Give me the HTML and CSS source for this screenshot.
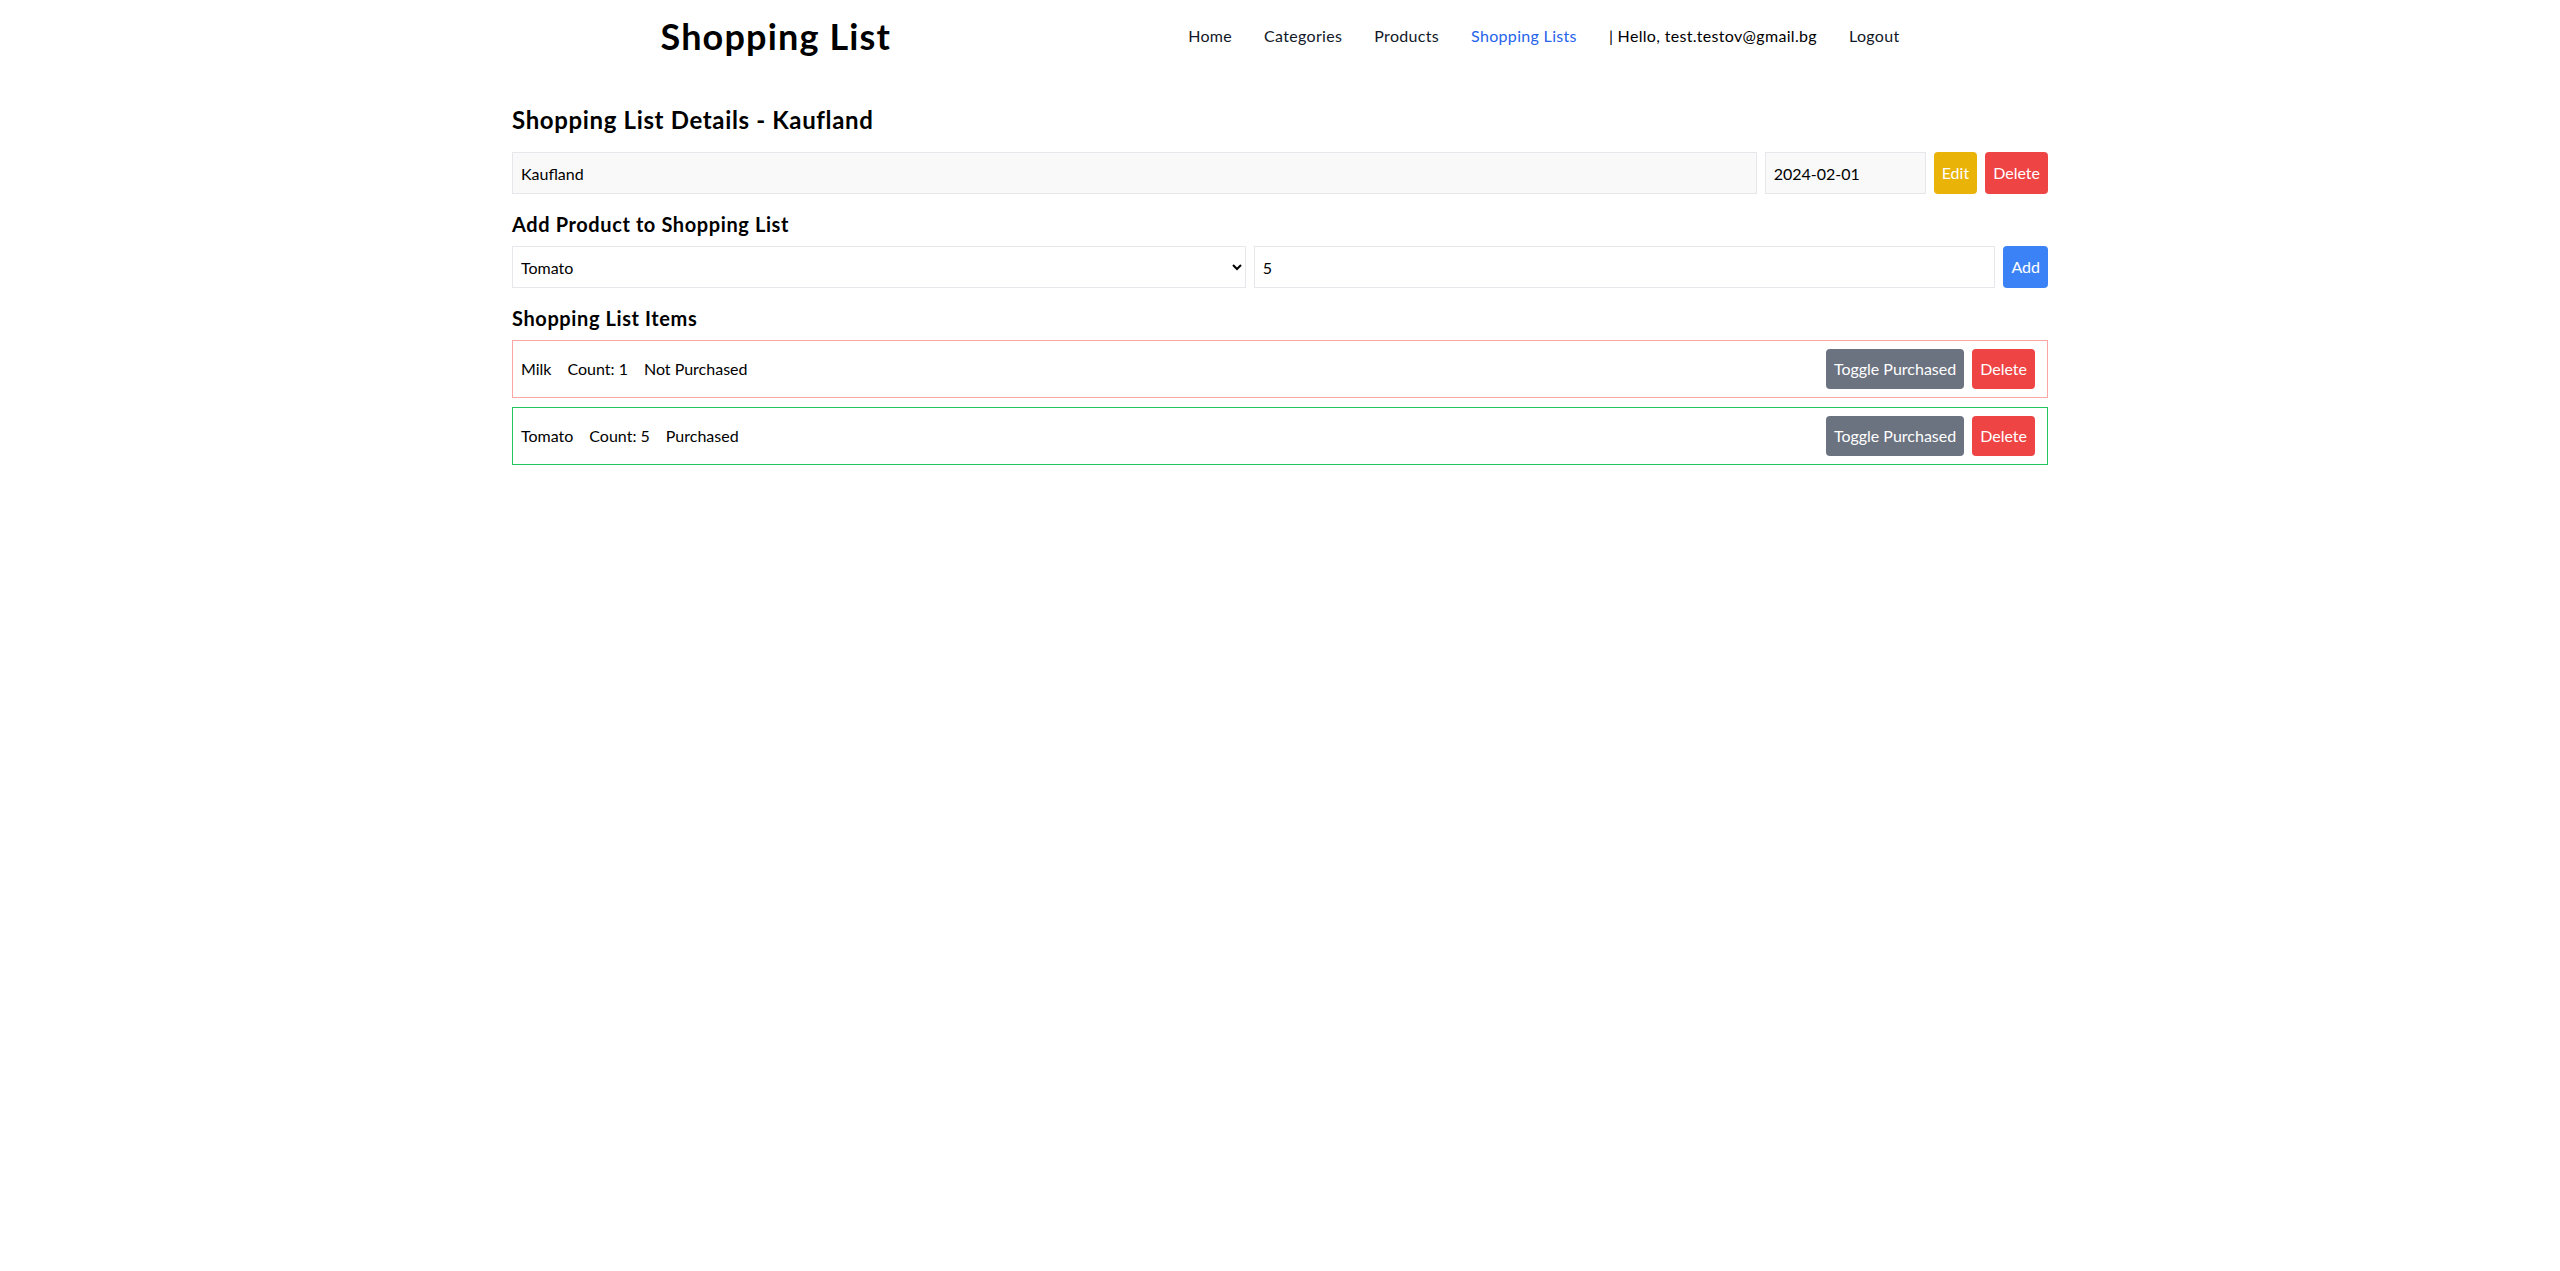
FILE: index.html
```html
<!DOCTYPE html>
<html lang="en">
<head>
<meta charset="utf-8">
<title>Shopping List</title>
<link rel="stylesheet" href="styles.css">
</head>
<body>
<header class="site-header">
  <h1 class="brand">Shopping List</h1>
  <nav class="nav">
    <a class="nav-link" href="#">Home</a>
    <a class="nav-link" href="#">Categories</a>
    <a class="nav-link" href="#">Products</a>
    <a class="nav-link active" href="#">Shopping Lists</a>
    <span class="nav-user">| Hello, test.testov@gmail.bg</span>
    <a class="nav-link" href="#">Logout</a>
  </nav>
</header>
<main class="page">
  <h2 class="title">Shopping List Details - Kaufland</h2>
  <div class="row mb-16">
    <input class="field field-grey grow" type="text" value="Kaufland">
    <input class="field field-grey date" type="text" value="2024-02-01">
    <button class="btn btn-yellow">Edit</button>
    <button class="btn btn-red">Delete</button>
  </div>
  <h3 class="subtitle">Add Product to Shopping List</h3>
  <div class="row mb-16">
    <select class="field grow select">
      <option>Milk</option>
      <option selected>Tomato</option>
    </select>
    <input class="field grow" type="number" value="5">
    <button class="btn btn-blue">Add</button>
  </div>
  <h3 class="subtitle">Shopping List Items</h3>
  <ul class="items">
    <li class="item item-pending">
      <div class="item-info">
        <span class="item-part">Milk</span>
        <span class="item-part">Count: 1</span>
        <span class="item-part">Not Purchased</span>
      </div>
      <div class="item-actions">
        <button class="btn btn-gray">Toggle Purchased</button>
        <button class="btn btn-red">Delete</button>
      </div>
    </li>
    <li class="item item-done">
      <div class="item-info">
        <span class="item-part">Tomato</span>
        <span class="item-part">Count: 5</span>
        <span class="item-part">Purchased</span>
      </div>
      <div class="item-actions">
        <button class="btn btn-gray">Toggle Purchased</button>
        <button class="btn btn-red">Delete</button>
      </div>
    </li>
  </ul>
</main>
</body>
</html>
```
FILE: styles.css
```css
* { box-sizing: border-box; }
html, body {
  margin: 0;
  padding: 0;
  background: #ffffff;
  color: #000000;
  font-family: Lato, "Liberation Sans", Arial, sans-serif;
  font-size: 16px;
  line-height: 24px;
}
.site-header {
  width: 1536px;
  margin: 0 auto;
  height: 72px;
  display: flex;
  align-items: center;
  justify-content: space-around;
}
.brand {
  margin: 0;
  font-size: 36px;
  line-height: 40px;
  font-weight: 700;
  letter-spacing: 0.032em;
}
.nav {
  display: flex;
  align-items: center;
  gap: 32px;
  font-weight: 400;
  font-size: 16px;
  letter-spacing: 0.02em;
}
.nav-link {
  color: #111827;
  text-decoration: none;
}
.nav-link.active { color: #2563eb; }
.nav-user { color: #000; }
.page {
  width: 1536px;
  margin: 32px auto 0;
}
.title {
  margin: 0 0 16px;
  font-size: 24px;
  line-height: 32px;
  font-weight: 700;
  letter-spacing: 0.027em;
}
.subtitle {
  margin: 0 0 8px;
  font-size: 20px;
  line-height: 28px;
  font-weight: 700;
  letter-spacing: 0.03em;
}
.row {
  display: flex;
  gap: 8px;
  align-items: stretch;
}
.mb-16 { margin-bottom: 16px; }
.field {
  height: 42px;
  padding: 8px;
  border: 1px solid #e5e7eb;
  background: #ffffff;
  font-family: inherit;
  font-size: 16px;
  color: #000;
  border-radius: 0;
  outline: none;
}
.field-grey { background: #f9f9f9; }
.grow { flex: 1 1 0; min-width: 0; }
.date { width: 161px; flex: none; }
.select { padding: 8px 4px; }
.btn {
  border: none;
  border-radius: 4px;
  padding: 8px;
  color: #ffffff;
  font-family: inherit;
  font-size: 16px;
  line-height: 24px;
  cursor: pointer;
}
.btn-yellow { background: #eab308; }
.btn-red { background: #ef4444; }
.btn-blue { background: #3b82f6; }
.btn-gray { background: #6b7280; }
.items {
  list-style: none;
  margin: 0;
  padding: 0;
}
.item {
  display: flex;
  align-items: center;
  justify-content: space-between;
  padding: 8px 12px 8px 8px;
  margin-bottom: 9px;
  border: 1px solid;
}
.item-pending { border-color: #fca5a5; }
.item-done { border-color: #22c55e; }
.item-info { display: flex; gap: 16px; }
.item-actions { display: flex; gap: 8px; }
```
